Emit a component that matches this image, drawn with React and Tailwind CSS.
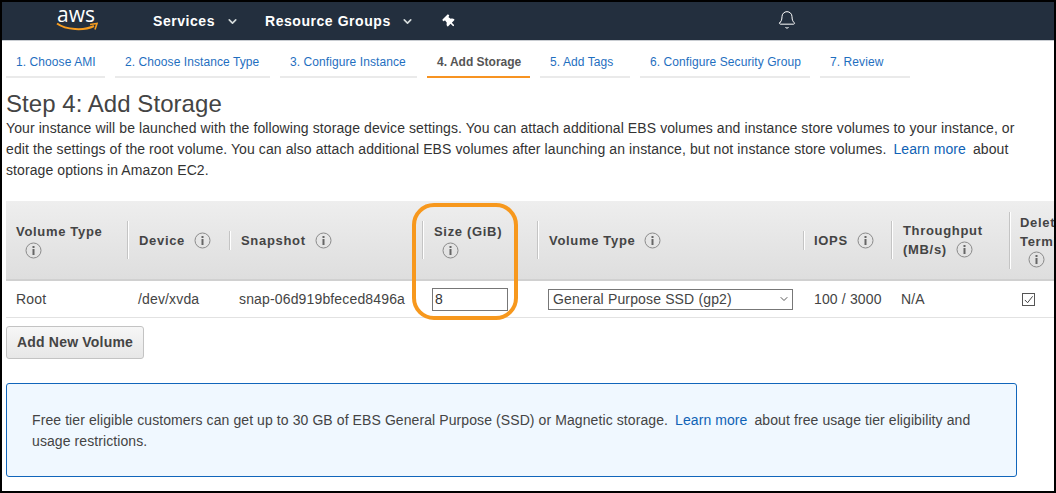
import React from "react";
import { Bell, ChevronDown } from "lucide-react";
import { FaThumbtack } from "react-icons/fa";

const steps = [
  { label: "1. Choose AMI", width: "w-[99px]" },
  { label: "2. Choose Instance Type", width: "w-[155px]" },
  { label: "3. Configure Instance", width: "w-[137px]" },
  { label: "4. Add Storage", width: "w-[103px]", active: true },
  { label: "5. Add Tags", width: "w-[90px]" },
  { label: "6. Configure Security Group", width: "w-[170px]" },
  { label: "7. Review", width: "w-[90px]" },
];

const InfoIcon = ({ className = "" }) => (
  <svg viewBox="0 0 17 17" className={`w-[17px] h-[17px] shrink-0 ${className}`}>
    <circle cx="8.5" cy="8.5" r="7.5" fill="none" stroke="#8a8a8a" strokeWidth="1" />
    <rect x="7.5" y="7" width="2" height="6" fill="#666" />
    <rect x="7.5" y="4" width="2" height="2" fill="#666" />
  </svg>
);

const Divider = ({ className }) => (
  <div className={`w-[2px] shrink-0 border-l border-l-[#c4c4c4] border-r border-r-white ${className}`} />
);

const HeaderCell = ({ width, divider, children }) => (
  <div className={`${width} shrink-0 flex items-center`}>
    {divider && <Divider className={divider} />}
    {children}
  </div>
);

export default function App() {
  return (
    <div className="w-[1056px] h-[493px] overflow-hidden bg-white border-t-2 border-l-2 border-b-2 border-r-2 border-black font-['Liberation_Sans',sans-serif] text-[#444]">
      {/* Top nav */}
      <nav className="h-[39px] bg-[#232f3e] border-b border-b-[#c9cdd2] flex items-center text-white">
        <div className="w-[151px] pl-[54px] shrink-0 flex flex-col items-start">
          <span className="text-[21px] leading-[18px] -mt-[6px] font-['Open_Sans',sans-serif] ml-[1px]">aws</span>
          <svg viewBox="0 0 42 10" className="w-[42px] h-[10px] -mt-[1px]">
            <path d="M1 1.5 C10 8 28 9 38 4" fill="none" stroke="#f79c1f" strokeWidth="2" />
            <path d="M34 2.5 L41 1.5 L39 7.5" fill="none" stroke="#f79c1f" strokeWidth="1.6" />
          </svg>
        </div>
        <div className="w-[112px] shrink-0 flex items-center text-[14px] font-bold tracking-[0.55px]">
          Services
          <ChevronDown size={13} strokeWidth={3} className="ml-[11px] text-[#d5dbdb]" />
        </div>
        <div className="w-[178px] shrink-0 flex items-center text-[14px] font-bold tracking-[0.55px]">
          Resource Groups
          <ChevronDown size={13} strokeWidth={3} className="ml-[10px] text-[#d5dbdb]" />
        </div>
        <FaThumbtack size={13} className="-rotate-45" />
        <Bell size={20} strokeWidth={1.2} className="ml-[321px] -mt-[2px] text-white" />
      </nav>

      {/* Wizard steps */}
      <div className="flex gap-[10px] pl-[4px] pt-[13px]">
        {steps.map((s) => (
          <div
            key={s.label}
            className={`${s.width} h-[24px] pl-[10px] text-[12px] leading-[17px] whitespace-nowrap border-b-2 ${
              s.active ? "border-b-[#f79321] text-[#555] font-bold" : "border-b-[#eaeaea] text-[#1f6fbf] tracking-[0.08px]"
            }`}
          >
            {s.label}
          </div>
        ))}
      </div>

      {/* Intro */}
      <div className="pl-[4px] pt-[12px]">
        <h1 className="text-[24px] leading-[28px] text-[#444] font-normal tracking-[0.05px]">Step 4: Add Storage</h1>
        <p className="text-[14px] leading-[21px] w-[1030px] text-[#333] tracking-[0.09px]">
          Your instance will be launched with the following storage device settings. You can attach additional EBS volumes and instance store volumes to your instance, or edit the settings of the root volume. You can also attach additional EBS volumes after launching an instance, but not instance store volumes.{" "}
          <span className="text-[#0f62b5] ml-[3px] mr-[3px]">Learn more</span> about storage options in Amazon EC2.
        </p>
      </div>

      {/* Volumes table */}
      <div className="relative ml-[4px] mt-[20px]">
        <div className="flex h-[80px] bg-gradient-to-b from-[#eeeeee] to-[#dedede] border-b-2 border-b-[#d0d0d0] text-[13px] leading-[19px] font-bold tracking-[0.68px] text-[#444]">
          <HeaderCell width="w-[121px]">
            <div className="pl-[10px]">
              Volume Type
              <InfoIcon className="ml-[9px] mt-[1px]" />
            </div>
          </HeaderCell>
          <HeaderCell width="w-[102px]" divider="h-[38px]">
            <span className="ml-[10px]">Device</span>
            <InfoIcon className="ml-[9px]" />
          </HeaderCell>
          <HeaderCell width="w-[193px]" divider="h-[19px]">
            <span className="ml-[10px]">Snapshot</span>
            <InfoIcon className="ml-[9px]" />
          </HeaderCell>
          <HeaderCell width="w-[115px]" divider="h-[38px]">
            <div className="ml-[10px]">
              Size (GiB)
              <InfoIcon className="ml-[8px] mt-[1px]" />
            </div>
          </HeaderCell>
          <HeaderCell width="w-[266px]" divider="h-[38px]">
            <span className="ml-[10px]">Volume Type</span>
            <InfoIcon className="ml-[9px]" />
          </HeaderCell>
          <HeaderCell width="w-[88px]" divider="h-[19px]">
            <span className="ml-[9px]">IOPS</span>
            <InfoIcon className="ml-[9px]" />
          </HeaderCell>
          <HeaderCell width="w-[118px]" divider="h-[38px]">
            <div className="ml-[10px]">
              Throughput
              <div className="flex items-center">
                (MB/s)
                <InfoIcon className="ml-[9px]" />
              </div>
            </div>
          </HeaderCell>
          <HeaderCell width="w-[60px]" divider="h-[57px]">
            <div className="ml-[9px] whitespace-nowrap">
              Delete on
              <br />
              Termination
              <InfoIcon className="ml-[8px]" />
            </div>
          </HeaderCell>
        </div>

        <div className="flex items-center h-[37px] border-b border-b-[#e2e2e2] text-[14px] text-[#444] tracking-[0.15px]">
          <div className="w-[121px] shrink-0 pl-[10px]">Root</div>
          <div className="w-[102px] shrink-0 pl-[11px]">/dev/xvda</div>
          <div className="w-[193px] shrink-0 pl-[10px]">snap-06d919bfeced8496a</div>
          <div className="w-[115px] shrink-0 pl-[10px]">
            <div className="w-[76px] h-[23px] border border-[#777] pl-[2px] leading-[21px] text-[#333]">8</div>
          </div>
          <div className="w-[266px] shrink-0 pl-[11px]">
            <div className="w-[245px] h-[21px] border border-[#777] pl-[4px] leading-[19px] flex items-center justify-between pr-[2px]">
              General Purpose SSD (gp2)
              <ChevronDown size={12} strokeWidth={1.8} className="text-[#444]" />
            </div>
          </div>
          <div className="w-[88px] shrink-0 pl-[11px]">100 / 3000</div>
          <div className="w-[118px] shrink-0 pl-[10px]">N/A</div>
          <div className="w-[47px] shrink-0 pl-[13px]">
            <div className="w-[13px] h-[13px] border border-[#555] flex items-center justify-center">
              <svg viewBox="0 0 12 12" className="w-[11px] h-[11px]">
                <path d="M2 6.5 L5 9.5 L10.5 2.5" fill="none" stroke="#333" strokeWidth="1" />
              </svg>
            </div>
          </div>
        </div>

        {/* Orange highlight annotation */}
        <div className="absolute left-[406px] top-[2px] w-[106px] h-[117px] border-[4px] border-[#f7981d] rounded-[22px]" />
      </div>

      <button className="block ml-[4px] mt-[8px] w-[138px] h-[33px] rounded-[3px] border border-[#c3c3c3] bg-gradient-to-b from-[#f6f6f6] to-[#e7e7e7] text-[14px] font-bold text-[#444] tracking-[0.2px]">
        Add New Volume
      </button>

      <div className="ml-[4px] mt-[24px] w-[1011px] h-[94px] rounded-[3px] border border-[#1166bb] bg-[#f0f8ff] pl-[25px] pr-[40px] pt-[26px] text-[14px] leading-[21px] text-[#444] tracking-[0.09px]">
        Free tier eligible customers can get up to 30 GB of EBS General Purpose (SSD) or Magnetic storage.{" "}
        <span className="text-[#0f62b5] ml-[3px] mr-[3px]">Learn more</span> about free usage tier eligibility and usage restrictions.
      </div>
    </div>
  );
}
